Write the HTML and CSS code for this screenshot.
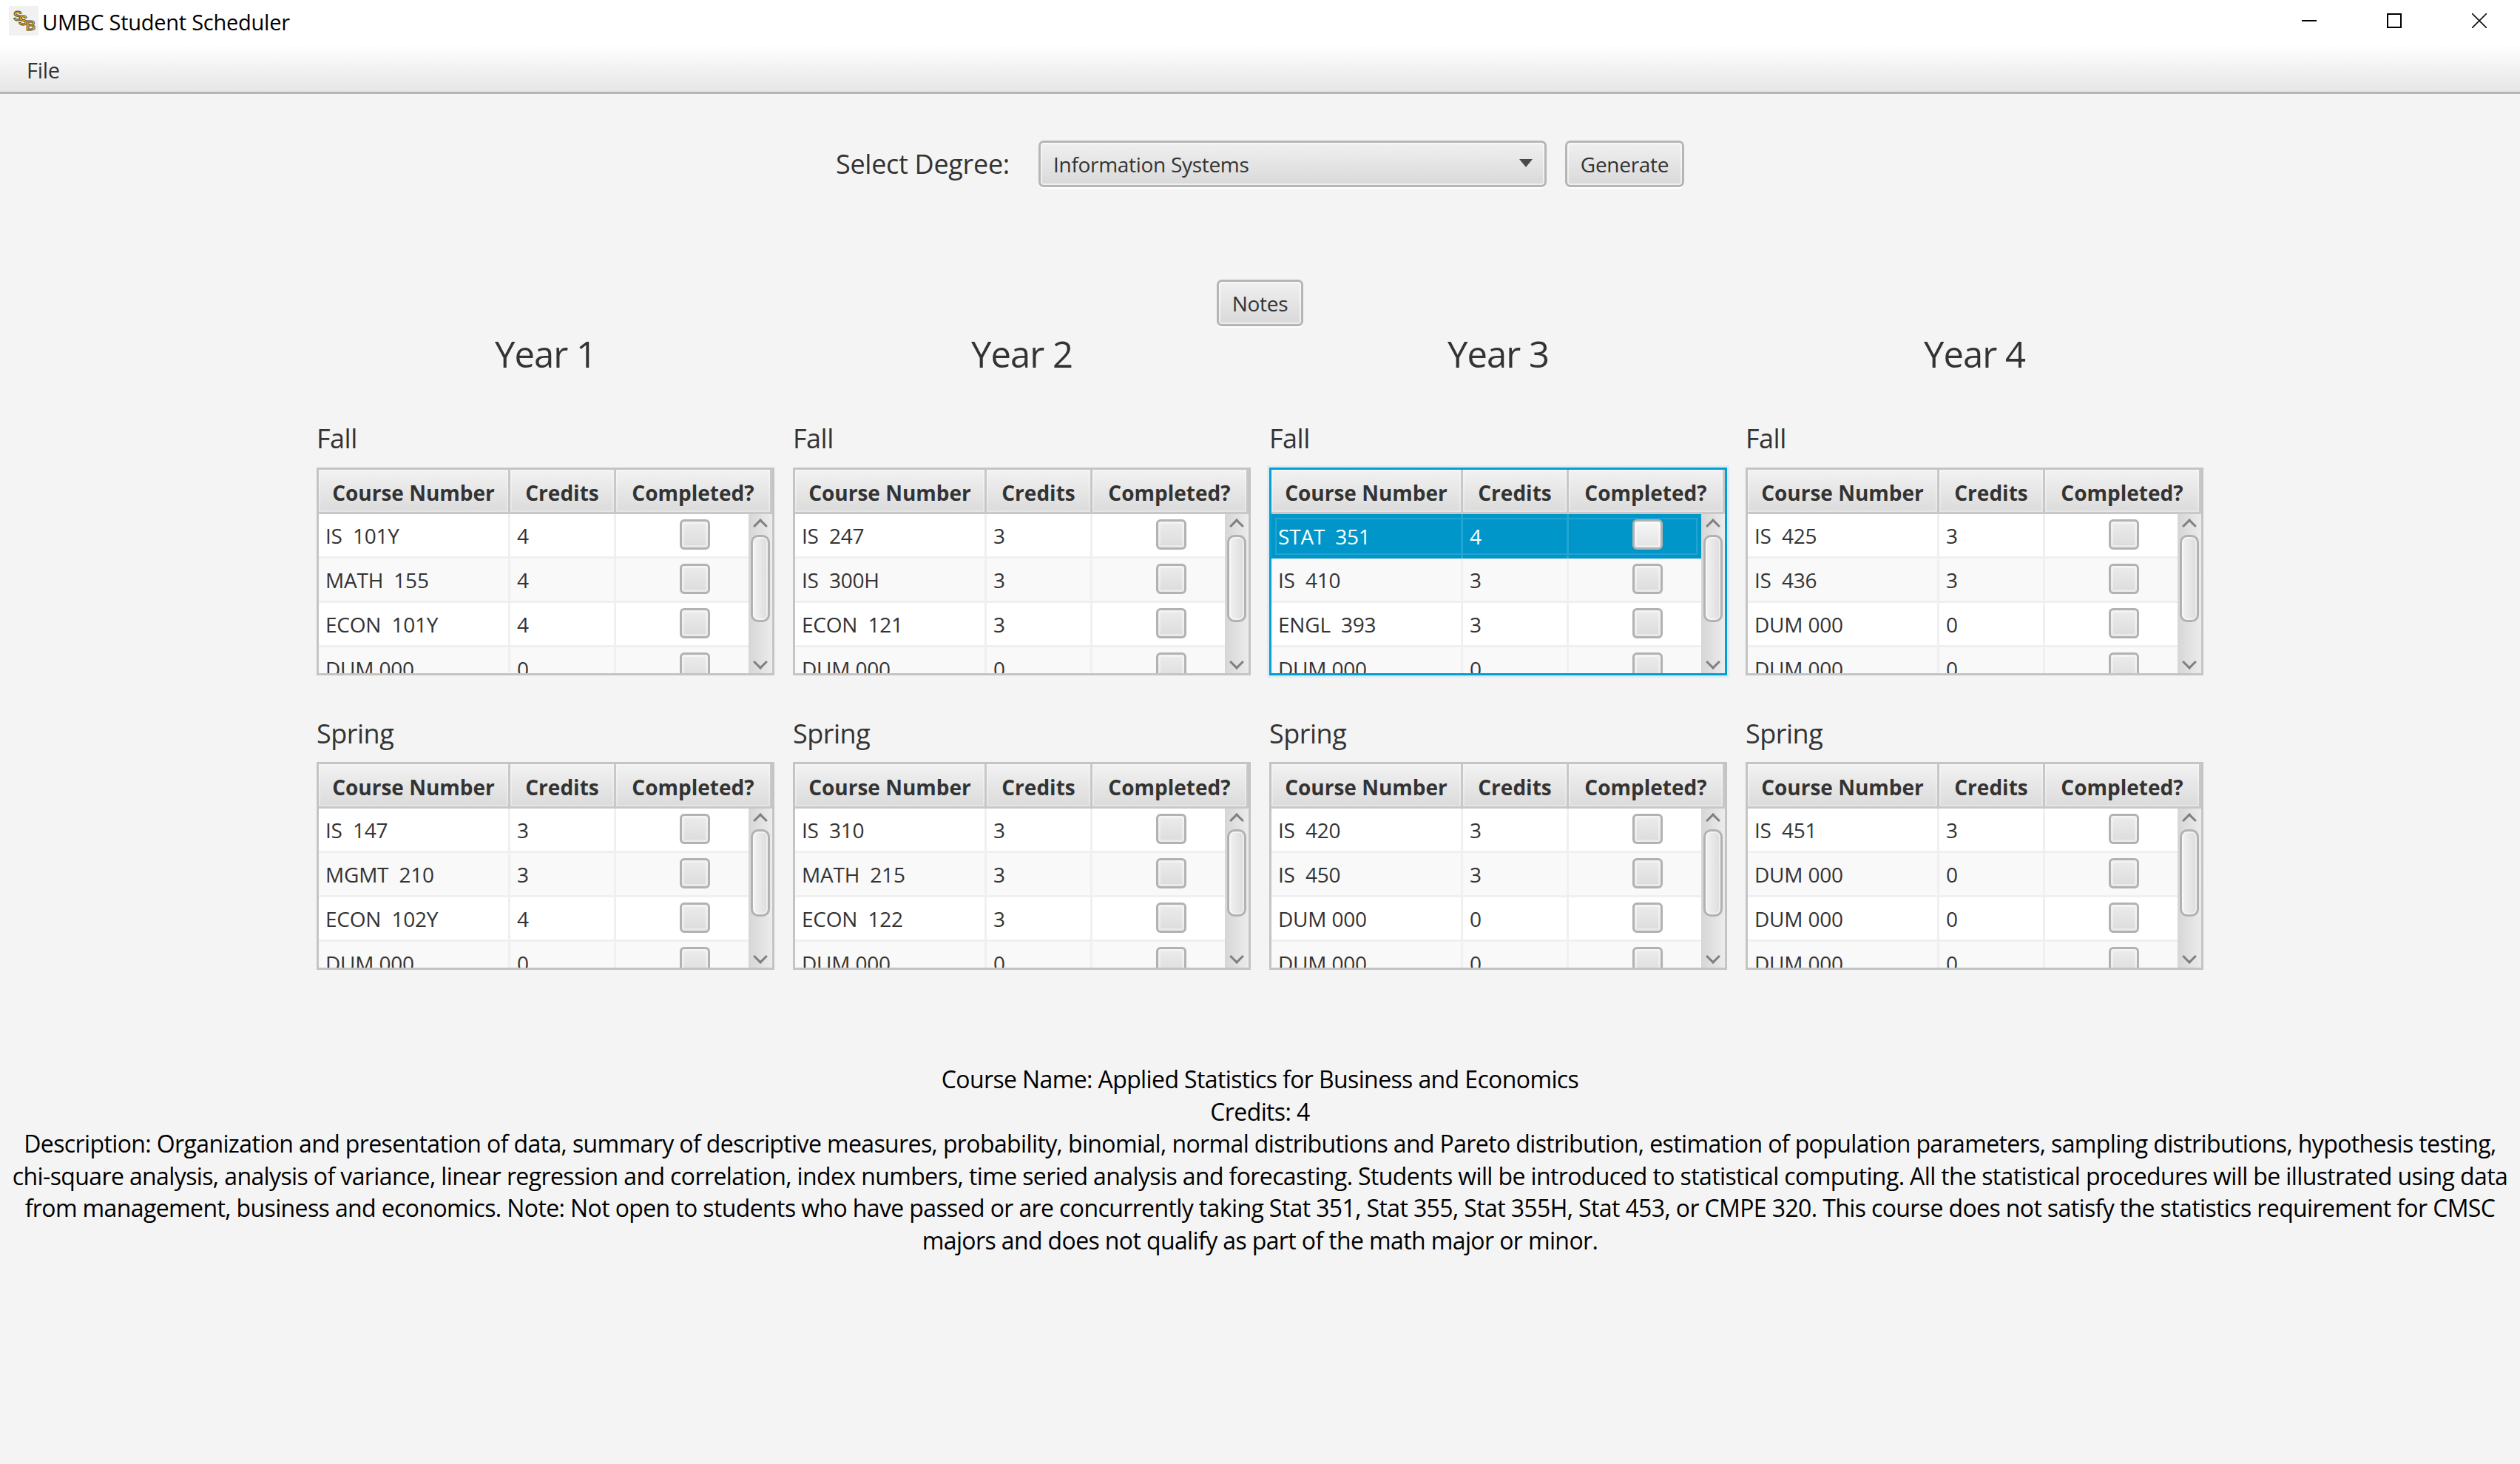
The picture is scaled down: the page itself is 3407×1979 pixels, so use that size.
FILE: index.html
```html
<!DOCTYPE html>
<html lang="en">
<head>
  <meta charset="UTF-8">
  <title>UMBC Student Scheduler</title>
  <link rel="stylesheet" href="styles.css">
</head>
<body>
  <div class="titlebar">
    <svg class="logo" width="40" height="40" viewBox="0 0 40 40">
      <rect width="40" height="40" fill="#f1f1f1"/>
      <g font-family="Liberation Sans, sans-serif" font-weight="700" font-size="18" fill="#f2b705" stroke="#4d4a3c" stroke-width="0.9">
        <text x="6" y="20">S</text>
        <text x="13" y="26">S</text>
        <text x="23" y="33">B</text>
      </g>
    </svg>
    <span class="app-title">UMBC Student Scheduler</span>
    <div class="win-buttons">
      <svg width="20" height="20" viewBox="0 0 20 20"><path d="M0 10h20" stroke="#000" stroke-width="2"/></svg>
      <svg width="20" height="20" viewBox="0 0 20 20"><rect x="1" y="1" width="18" height="18" fill="none" stroke="#000" stroke-width="2"/></svg>
      <svg width="20" height="20" viewBox="0 0 20 20"><path d="M0 0l20 20M20 0L0 20" stroke="#111" stroke-width="1.6"/></svg>
    </div>
  </div>
  <div class="menubar"><span class="menu-item">File</span></div>

  <div class="degree-row">
    <span class="degree-label">Select Degree:</span>
    <div class="combo"><span>Information Systems</span><i class="combo-arrow"></i></div>
    <button class="btn generate">Generate</button>
  </div>

  <div class="notes-row"><button class="btn notes">Notes</button></div>

  <div class="years">
    <div class="year">
      <h2>Year 1</h2>
      <h3>Fall</h3>
      <div class="table-view">
        <div class="thead"><span>Course Number</span><span>Credits</span><span>Completed?</span></div>
        <div class="tbody">
          <div class="rows">
            <div class="row"><span>IS  101Y</span><span>4</span><span><i class="check"></i></span></div>
            <div class="row"><span>MATH  155</span><span>4</span><span><i class="check"></i></span></div>
            <div class="row"><span>ECON  101Y</span><span>4</span><span><i class="check"></i></span></div>
            <div class="row"><span>DUM 000</span><span>0</span><span><i class="check"></i></span></div>
          </div>
          <div class="scrollbar"><i class="arrow up"></i><i class="thumb"></i><i class="arrow down"></i></div>
        </div>
      </div>
      <h3 class="spring">Spring</h3>
      <div class="table-view">
        <div class="thead"><span>Course Number</span><span>Credits</span><span>Completed?</span></div>
        <div class="tbody">
          <div class="rows">
            <div class="row"><span>IS  147</span><span>3</span><span><i class="check"></i></span></div>
            <div class="row"><span>MGMT  210</span><span>3</span><span><i class="check"></i></span></div>
            <div class="row"><span>ECON  102Y</span><span>4</span><span><i class="check"></i></span></div>
            <div class="row"><span>DUM 000</span><span>0</span><span><i class="check"></i></span></div>
          </div>
          <div class="scrollbar"><i class="arrow up"></i><i class="thumb"></i><i class="arrow down"></i></div>
        </div>
      </div>
    </div>

    <div class="year">
      <h2>Year 2</h2>
      <h3>Fall</h3>
      <div class="table-view">
        <div class="thead"><span>Course Number</span><span>Credits</span><span>Completed?</span></div>
        <div class="tbody">
          <div class="rows">
            <div class="row"><span>IS  247</span><span>3</span><span><i class="check"></i></span></div>
            <div class="row"><span>IS  300H</span><span>3</span><span><i class="check"></i></span></div>
            <div class="row"><span>ECON  121</span><span>3</span><span><i class="check"></i></span></div>
            <div class="row"><span>DUM 000</span><span>0</span><span><i class="check"></i></span></div>
          </div>
          <div class="scrollbar"><i class="arrow up"></i><i class="thumb"></i><i class="arrow down"></i></div>
        </div>
      </div>
      <h3 class="spring">Spring</h3>
      <div class="table-view">
        <div class="thead"><span>Course Number</span><span>Credits</span><span>Completed?</span></div>
        <div class="tbody">
          <div class="rows">
            <div class="row"><span>IS  310</span><span>3</span><span><i class="check"></i></span></div>
            <div class="row"><span>MATH  215</span><span>3</span><span><i class="check"></i></span></div>
            <div class="row"><span>ECON  122</span><span>3</span><span><i class="check"></i></span></div>
            <div class="row"><span>DUM 000</span><span>0</span><span><i class="check"></i></span></div>
          </div>
          <div class="scrollbar"><i class="arrow up"></i><i class="thumb"></i><i class="arrow down"></i></div>
        </div>
      </div>
    </div>

    <div class="year">
      <h2>Year 3</h2>
      <h3>Fall</h3>
      <div class="table-view focused">
        <div class="thead"><span>Course Number</span><span>Credits</span><span>Completed?</span></div>
        <div class="tbody">
          <div class="rows">
            <div class="row selected"><span>STAT  351</span><span>4</span><span><i class="check"></i></span></div>
            <div class="row"><span>IS  410</span><span>3</span><span><i class="check"></i></span></div>
            <div class="row"><span>ENGL  393</span><span>3</span><span><i class="check"></i></span></div>
            <div class="row"><span>DUM 000</span><span>0</span><span><i class="check"></i></span></div>
          </div>
          <div class="scrollbar"><i class="arrow up"></i><i class="thumb"></i><i class="arrow down"></i></div>
        </div>
      </div>
      <h3 class="spring">Spring</h3>
      <div class="table-view">
        <div class="thead"><span>Course Number</span><span>Credits</span><span>Completed?</span></div>
        <div class="tbody">
          <div class="rows">
            <div class="row"><span>IS  420</span><span>3</span><span><i class="check"></i></span></div>
            <div class="row"><span>IS  450</span><span>3</span><span><i class="check"></i></span></div>
            <div class="row"><span>DUM 000</span><span>0</span><span><i class="check"></i></span></div>
            <div class="row"><span>DUM 000</span><span>0</span><span><i class="check"></i></span></div>
          </div>
          <div class="scrollbar"><i class="arrow up"></i><i class="thumb"></i><i class="arrow down"></i></div>
        </div>
      </div>
    </div>

    <div class="year">
      <h2>Year 4</h2>
      <h3>Fall</h3>
      <div class="table-view">
        <div class="thead"><span>Course Number</span><span>Credits</span><span>Completed?</span></div>
        <div class="tbody">
          <div class="rows">
            <div class="row"><span>IS  425</span><span>3</span><span><i class="check"></i></span></div>
            <div class="row"><span>IS  436</span><span>3</span><span><i class="check"></i></span></div>
            <div class="row"><span>DUM 000</span><span>0</span><span><i class="check"></i></span></div>
            <div class="row"><span>DUM 000</span><span>0</span><span><i class="check"></i></span></div>
          </div>
          <div class="scrollbar"><i class="arrow up"></i><i class="thumb"></i><i class="arrow down"></i></div>
        </div>
      </div>
      <h3 class="spring">Spring</h3>
      <div class="table-view">
        <div class="thead"><span>Course Number</span><span>Credits</span><span>Completed?</span></div>
        <div class="tbody">
          <div class="rows">
            <div class="row"><span>IS  451</span><span>3</span><span><i class="check"></i></span></div>
            <div class="row"><span>DUM 000</span><span>0</span><span><i class="check"></i></span></div>
            <div class="row"><span>DUM 000</span><span>0</span><span><i class="check"></i></span></div>
            <div class="row"><span>DUM 000</span><span>0</span><span><i class="check"></i></span></div>
          </div>
          <div class="scrollbar"><i class="arrow up"></i><i class="thumb"></i><i class="arrow down"></i></div>
        </div>
      </div>
    </div>
  </div>

  <p class="details">Course Name: Applied Statistics for Business and Economics<br>
  Credits: 4<br>
  Description: Organization and presentation of data, summary of descriptive measures, probability, binomial, normal distributions and Pareto distribution, estimation of population parameters, sampling distributions, hypothesis testing,<br>
  chi-square analysis, analysis of variance, linear regression and correlation, index numbers, time seried analysis and forecasting. Students will be introduced to statistical computing. All the statistical procedures will be illustrated using data<br>
  from management, business and economics. Note: Not open to students who have passed or are concurrently taking Stat 351, Stat 355, Stat 355H, Stat 453, or CMPE 320. This course does not satisfy the statistics requirement for CMSC<br>
  majors and does not qualify as part of the math major or minor.</p>
</body>
</html>
```

FILE: styles.css
```css
* {
  box-sizing: border-box;
}

body {
  margin: 0;
  width: 3407px;
  height: 1979px;
  overflow: hidden;
  background: #f4f4f4;
  color: #333;
  font-family: "Open Sans", "Noto Sans", sans-serif;
}

.titlebar {
  display: flex;
  align-items: center;
  height: 62px;
  padding-left: 12px;
  background: #fff;
}

.logo {
  margin-top: -6px;
}

.app-title {
  margin-left: 5px;
  margin-top: -4px;
  font-size: 29px;
  letter-spacing: -0.25px;
  color: #000;
}

.win-buttons {
  display: flex;
  gap: 95px;
  margin-left: auto;
  margin-right: 45px;
  margin-top: -6px;
}

.menubar {
  height: 65px;
  padding: 2px 0 0 36px;
  display: flex;
  align-items: center;
  border-bottom: 3px solid #b6b6b6;
  background: linear-gradient(#fefefe, #e6e6e6);
}

.menu-item {
  font-size: 29px;
  letter-spacing: -0.3px;
}

.degree-row {
  display: flex;
  align-items: center;
  height: 63px;
  margin-top: 63px;
  margin-left: 1130px;
}

.degree-label {
  width: 274px;
  font-size: 36px;
  letter-spacing: -0.3px;
}

.btn, .combo {
  height: 63px;
  border: 3px solid #b6b6b6;
  border-radius: 7px;
  background: linear-gradient(#f0f0f0, #d9d9d9);
  box-shadow: inset 0 0 0 2px rgba(255,255,255,0.55), 0 2px 0 #fff;
  color: #333;
  font-family: inherit;
  font-size: 28px;
  letter-spacing: -0.3px;
}

.combo {
  position: relative;
  display: flex;
  align-items: center;
  width: 687px;
  padding-left: 17px;
}

.combo-arrow {
  position: absolute;
  right: 16px;
  top: 22px;
  border-left: 9px solid transparent;
  border-right: 9px solid transparent;
  border-top: 11px solid #4a4a4a;
}

.btn {
  padding: 0;
}

.generate {
  width: 161px;
  margin-left: 25px;
}

.notes-row {
  display: flex;
  justify-content: center;
  margin-top: 125px;
}

.notes {
  width: 117px;
}

.years {
  display: grid;
  grid-template-columns: repeat(4, 619px);
  column-gap: 25px;
  margin-left: 428px;
}

.year h2 {
  height: 70px;
  margin: 2px 0 0;
  font-size: 49px;
  font-weight: 400;
  line-height: 70px;
  letter-spacing: -1px;
  text-align: center;
}

.year h3 {
  height: 50px;
  margin: 55px 0 14px;
  font-size: 36px;
  font-weight: 400;
  line-height: 50px;
  letter-spacing: -0.5px;
}

.year h3.spring {
  margin-top: 54px;
  margin-bottom: 13px;
}

.table-view {
  height: 281px;
  border: 3px solid #c4c4c4;
  overflow: hidden;
  background: #fff;
}

.table-view.focused {
  border-color: #039ed3;
  box-shadow: 0 0 0 3px #dcedf3;
  overflow: visible;
}

.thead {
  display: grid;
  grid-template-columns: 259px 143px 1fr;
  height: 60px;
}

.thead span {
  display: flex;
  align-items: center;
  justify-content: center;
  padding-top: 4px;
  border-right: 3px solid #c8c8c8;
  border-bottom: 3px solid #c8c8c8;
  background: linear-gradient(#f2f2f2, #dbdbdb);
  box-shadow: inset 0 0 0 2px rgba(255,255,255,0.3);
  font-size: 28px;
  font-weight: 700;
  letter-spacing: 0;
}

.tbody {
  display: flex;
  height: 215px;
}

.rows {
  flex: 1;
  overflow: hidden;
}

.row {
  display: grid;
  grid-template-columns: 259px 143px 1fr;
  height: 60px;
  border-bottom: 3px solid #f0f0f0;
  background: #fff;
  font-size: 28px;
  letter-spacing: -0.2px;
}

.row:nth-child(even) {
  background: #f9f9f9;
}

.row span {
  display: flex;
  align-items: center;
  padding-left: 9px;
  border-right: 3px solid #f0f0f0;
  white-space: pre;
}

.row span:last-child {
  border-right: none;
  padding-left: 86px;
  align-items: flex-start;
  padding-top: 7px;
}

.row.selected {
  border-bottom: none;
  background: #0096c9;
  box-shadow: inset 0 0 0 5px #0096c9, inset 0 0 0 7px #22a4d0;
  color: #fff;
}

.row.selected span {
  border-right-color: #22a4d0;
}

.check {
  display: block;
  width: 41px;
  height: 41px;
  border: 3px solid #b2b2b2;
  border-radius: 6px;
  background: linear-gradient(#ececec, #dcdcdc);
  box-shadow: inset 0 0 0 3px rgba(255,255,255,0.4);
}

.selected .check {
  background: linear-gradient(#f6f6f6, #e4e4e4);
}

.scrollbar {
  display: flex;
  flex-direction: column;
  align-items: center;
  width: 32px;
  background: linear-gradient(90deg, #d6d6d6, #ececec);
}

.arrow {
  display: block;
  width: 14px;
  height: 14px;
  border-left: 3px solid #808080;
  border-top: 3px solid #808080;
}

.arrow.up {
  margin-top: 9px;
  transform: rotate(45deg);
}

.arrow.down {
  margin-top: 47px;
  transform: rotate(225deg);
}

.thumb {
  display: block;
  width: 26px;
  height: 118px;
  margin-top: 5px;
  border: 3px solid #b2b2b2;
  border-radius: 10px;
  background: linear-gradient(90deg, #f2f2f2, #dcdcdc);
  box-shadow: inset 0 0 0 2px rgba(255,255,255,0.5);
}

.details {
  margin: 126px 0 0;
  font-size: 32px;
  line-height: 43.5px;
  letter-spacing: -0.62px;
  color: #000;
  text-align: center;
  white-space: nowrap;
}
```
